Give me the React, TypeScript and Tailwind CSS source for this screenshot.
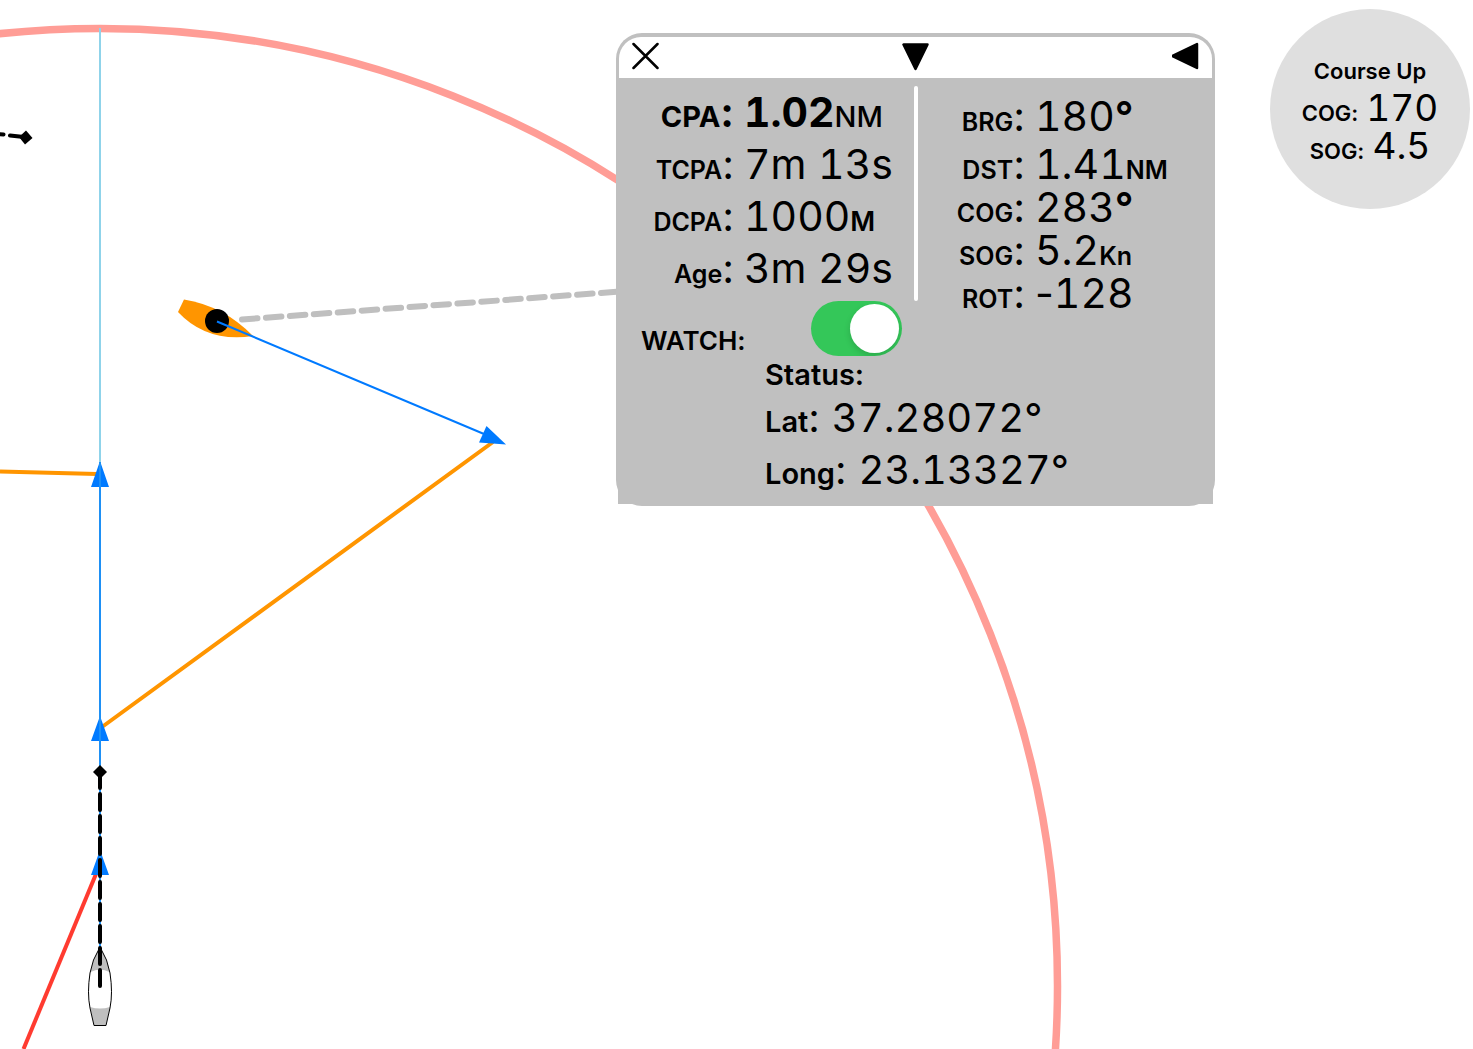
import React, { useState } from "react";

type Reading = {
  label: string;
  value: string;
  unit?: string;
  unitClass?: string;
  labelClass?: string;
  rowClass?: string;
};

const approach: Reading[] = [
  { label: "CPA", value: "1.02", unit: "NM", labelClass: "text-[29px]", unitClass: "text-[29px] font-medium", rowClass: "font-bold" },
  { label: "TCPA", value: "7m 13s" },
  { label: "DCPA", value: "1000", unit: "M", unitClass: "text-[27px] font-semibold" },
  { label: "Age", value: "3m 29s" },
];

const motion: Reading[] = [
  { label: "BRG", value: "180", unit: "°", unitClass: "font-semibold", rowClass: "mb-[5px]" },
  { label: "DST", value: "1.41", unit: "NM" },
  { label: "COG", value: "283", unit: "°", unitClass: "font-semibold" },
  { label: "SOG", value: "5.2", unit: "Kn" },
  { label: "ROT", value: "-128" },
];

/* Digits keep a fixed pitch; signs, spaces and unit letters stay proportional. */
function Figures({ text }: { text: string }) {
  return (
    <>
      {text.split(/([\d.]+)/).map((part, i) =>
        i % 2 === 1 ? (
          <span key={i} className="tabular-nums">
            {part}
          </span>
        ) : (
          part
        ),
      )}
    </>
  );
}

function ReadingRow({ item, lineClass }: { item: Reading; lineClass: string }) {
  return (
    <div className={`flex items-baseline gap-[10px] whitespace-nowrap ${lineClass} ${item.rowClass ?? ""}`}>
      <dt className="w-[116px] shrink-0 text-right">
        <span className={`leading-none ${item.labelClass ?? "text-[25px] font-semibold"}`}>{item.label}</span>:
      </dt>
      <dd>
        <Figures text={item.value} />
        {item.unit && (
          <span className={`leading-none ${item.unitClass ?? "text-[25px] font-semibold"}`}>{item.unit}</span>
        )}
      </dd>
    </div>
  );
}

function Chart() {
  return (
    <svg className="absolute inset-0 h-full w-full" fill="none" aria-hidden="true">
      <circle cx="100" cy="986" r="957.5" stroke="#ff9d96" strokeWidth="7.500" />
      <path d="M242 319.500L620 291.500" stroke="#bfbfbf" strokeWidth="6" strokeLinecap="round" strokeDasharray="15.5 8.5" />
      <path d="M0 471.500L97 474M102 727L493 442" stroke="#ff9500" strokeWidth="4" />
      <path d="M96 874L23.500 1049" stroke="#ff3b30" strokeWidth="4" />
      <path d="M100 461L109 487H91ZM100 716L109 741H91ZM100 850L109 875H91Z" fill="#007aff" />
      <path d="M100 28V462" stroke="#8fd3ea" strokeWidth="2" />
      <path d="M100 462V950" stroke="#1e90f5" strokeWidth="2" />
      <path d="M184 299.500Q224 306 253 336Q207 343 178 312Z" fill="#ff9500" />
      <circle cx="217" cy="321" r="12" fill="#000" />
      <path d="M217 321.500L484 434" stroke="#007aff" strokeWidth="2" />
      <path d="M506 444.500L479 442.500L486.500 426Z" fill="#007aff" />
      <path d="M100 947Q92 960 90 973Q87 993 90 1008L94 1025.500H106L110 1008Q113 993 110 973Q108 960 100 947Z" fill="#fff" />
      <path d="M100 947Q92 960 90.500 972Q100 967 109.500 972Q108 960 100 947ZM90 1007Q100 1010 110 1007L106 1025.500H94Z" fill="#bfbfbf" />
      <path d="M100 947Q92 960 90 973Q87 993 90 1008L94 1025.500H106L110 1008Q113 993 110 973Q108 960 100 947Z" stroke="#000" strokeWidth="1" />
      <path d="M100 986V774" stroke="#000" strokeWidth="4" strokeLinecap="round" strokeDasharray="16 6" />
      <path d="M100 765L107 772L100 779L93 772Z" fill="#000" />
      <path d="M-12 133L3.500 134.500M10 135.500L24 137" stroke="#000" strokeWidth="4" strokeLinecap="round" />
      <path d="M26 130.500L32.500 138L25 144.500L19 137Z" fill="#000" />
    </svg>
  );
}

function TargetPanel() {
  const [watch, setWatch] = useState(true);
  return (
    <section aria-label="Target" className="w-[599px] rounded-[26px] bg-[#c0c0c0] px-[2px] pt-1 pb-[2px]">
      <header className="mx-[1px] flex h-[41px] items-start justify-between rounded-t-[22px] bg-white px-3 pt-1">
        <button type="button" aria-label="Close">
          <svg className="h-[30px] w-[28px]" viewBox="0 0 28 30" fill="none">
            <path d="M2.500 3L26.500 27M26.500 3L2.500 27" stroke="#000" strokeWidth="2.500" strokeLinecap="round" />
          </svg>
        </button>
        <button type="button" aria-label="Collapse">
          <svg className="h-[30px] w-[28px]" viewBox="0 0 28 30">
            <path d="M1.500 3.500H25.500L13.500 28Z" stroke="#000" strokeWidth="2.500" strokeLinejoin="round" />
          </svg>
        </button>
        <button type="button" aria-label="Move left">
          <svg className="h-[30px] w-[28px]" viewBox="0 0 28 30">
            <path d="M25 3V27L0.500 15Z" stroke="#000" strokeWidth="2.500" strokeLinejoin="round" />
          </svg>
        </button>
      </header>

      <div className="bg-[#c0c0c0] pb-2">
        <div className="flex">
          <div className="w-[296px]">
            <dl className="pt-2 text-[41px]">
              {approach.map((r) => (
                <ReadingRow key={r.label} item={r} lineClass="h-[52px] leading-[52px]" />
              ))}
            </dl>
            <div className="mt-[7px] flex items-start justify-between pr-3 pl-[23px]">
              <label htmlFor="watch" className="pt-6 text-[26px] leading-8 font-semibold">
                WATCH:
              </label>
              <input
                id="watch"
                type="checkbox"
                role="switch"
                checked={watch}
                onChange={(e) => setWatch(e.target.checked)}
                className="flex h-[55px] w-[91px] appearance-none items-center overflow-hidden rounded-full bg-[#8e8e93] px-[3px] before:size-[49px] before:rounded-full before:bg-white before:shadow-[0_3px_6px_rgba(0,0,0,0.15)] checked:justify-end checked:bg-[#34c759]"
              />
            </div>
          </div>
          <div className="mt-2 h-[215px] w-1 rounded-full bg-white" />
          <dl className="-ml-[9px] pt-[17px] text-[41px]">
            {motion.map((r) => (
              <ReadingRow key={r.label} item={r} lineClass="h-[43px] leading-[43px]" />
            ))}
          </dl>
        </div>
        <dl className="pl-[147px] text-[29px] font-semibold">
          <div className="h-[35px] leading-9">
            <dt>Status:</dt>
          </div>
          {[
            ["Lat", "37.28072°"],
            ["Long", "23.13327°"],
          ].map(([name, value]) => (
            <div key={name} className="flex h-[52px] items-baseline gap-3 text-[40px] leading-[52px] font-normal">
              <dt>
                <span className="text-[29px] leading-none font-semibold">{name}</span>:
              </dt>
              <dd>
                <Figures text={value} />
              </dd>
            </div>
          ))}
        </dl>
      </div>
    </section>
  );
}

function CourseBadge() {
  return (
    <aside className="mt-[9px] flex size-[200px] flex-col items-center rounded-full bg-[#dfdfdf] pt-[46px]">
      <h2 className="text-[22px] leading-8 font-semibold">Course Up</h2>
      <p className="mt-[2px] flex h-[38px] items-baseline gap-2 text-[37px] leading-[38px]">
        <span className="text-[22px] leading-none font-semibold">COG:</span>
        <Figures text="170" />
      </p>
      <p className="flex h-[38px] items-baseline gap-2 text-[37px] leading-[38px]">
        <span className="text-[22px] leading-none font-semibold">SOG:</span>
        <Figures text="4.5" />
      </p>
    </aside>
  );
}

export default function App() {
  return (
    <main className="relative min-h-screen overflow-hidden bg-white font-['Inter',sans-serif] text-black [font-feature-settings:'calt'_0]">
      <Chart />
      <div className="relative flex items-start justify-end gap-[55px] pr-[3px]">
        <div className="mt-[33px]">
          <TargetPanel />
        </div>
        <CourseBadge />
      </div>
    </main>
  );
}
